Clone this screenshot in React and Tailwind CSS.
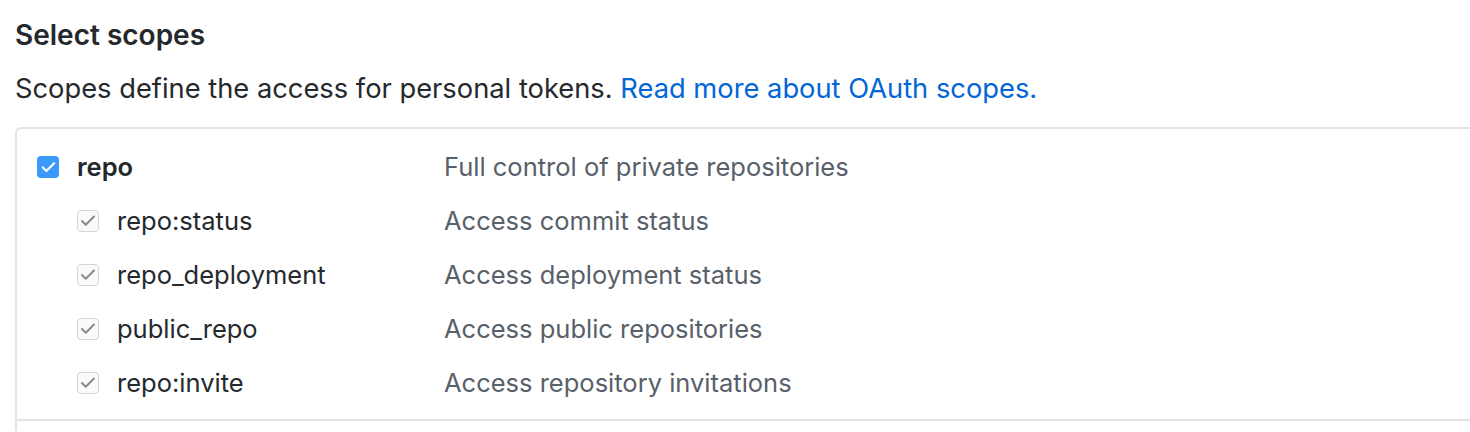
import { Check } from 'lucide-react'

const scopes = [
  { name: 'repo:status', desc: 'Access commit status' },
  { name: 'repo_deployment', desc: 'Access deployment status' },
  { name: 'public_repo', desc: 'Access public repositories' },
  { name: 'repo:invite', desc: 'Access repository invitations' },
]

function Checkbox({ disabled }) {
  if (disabled) {
    return (
      <span className="flex h-[22px] w-[22px] shrink-0 items-center justify-center rounded-[4px] border border-[#d5d5d5] bg-[#fafafa]">
        <Check className="h-[18px] w-[18px] text-[#8a8a8a]" strokeWidth={2.6} />
      </span>
    )
  }
  return (
    <span className="flex h-[22px] w-[22px] shrink-0 items-center justify-center rounded-[4px] bg-[#3b99fc]">
      <Check className="h-[17px] w-[17px] text-white" strokeWidth={3} />
    </span>
  )
}

export default function App() {
  return (
    <div className="min-h-[432px] w-[1470px] overflow-hidden bg-white pl-[15px] pt-[18px] font-['Inter',sans-serif] text-[#24292e]">
      <h2 className="text-[28px] font-semibold leading-[34px]">Select scopes</h2>
      <p className="mt-[20px] text-[27.3px] leading-[34px]">
        Scopes define the access for personal tokens.{' '}
        <a className="text-[#0366d6]">Read more about OAuth scopes.</a>
      </p>
      <div className="mt-[21px] w-[1500px] rounded-tl-[6px] border-l-2 border-t-2 border-[#e1e4e8]">
        <div className="pb-[17px] pt-[19px]">
          <div className="flex h-[38px] items-center">
            <div className="flex w-[427px] items-center gap-[18px] pl-[20px]">
              <Checkbox />
              <span className="text-[25.5px] font-semibold">repo</span>
            </div>
            <span className="text-[25.5px] text-[#586069]">Full control of private repositories</span>
          </div>
          {scopes.map((s) => (
            <div key={s.name} className="mt-[16px] flex h-[38px] items-center">
              <div className="flex w-[427px] items-center gap-[18px] pl-[60px]">
                <Checkbox disabled />
                <span className="text-[25.5px]">{s.name}</span>
              </div>
              <span className="text-[25.5px] text-[#586069]">{s.desc}</span>
            </div>
          ))}
        </div>
        <div className="h-[12px] border-t-2 border-[#e1e4e8]" />
      </div>
    </div>
  )
}
